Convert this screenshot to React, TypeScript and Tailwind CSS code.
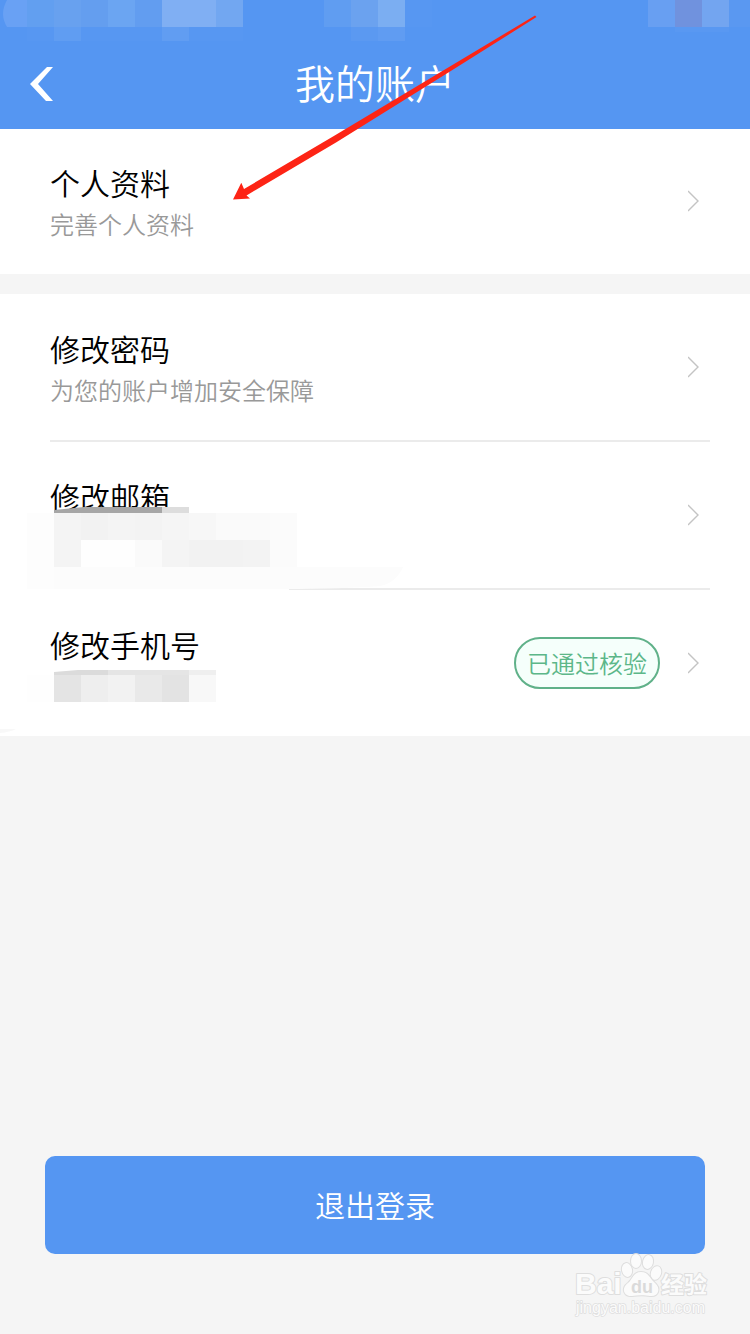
import React from "react";

type Block = [x: number, y: number, width: number, height: number, fill: string];

const statusLeft: Block[] = [
  [27, 0, 27, 27, "#629ff0"],
  [54, 0, 27, 27, "#68a1ef"],
  [81, 0, 27, 27, "#649eef"],
  [108, 0, 27, 27, "#6ba5f2"],
  [135, 0, 27, 27, "#629df0"],
  [162, 0, 54, 27, "#80aff3"],
  [216, 0, 27, 27, "#72a7f1"],
  [27, 27, 27, 14, "#5797f2"],
  [54, 27, 27, 14, "#609df2"],
  [81, 27, 81, 14, "#5797f2"],
  [162, 27, 27, 14, "#619df2"],
  [189, 27, 54, 14, "#5797f2"],
];

const statusCenter: Block[] = [
  [0, 0, 27, 27, "#609df1"],
  [27, 0, 27, 27, "#6ba2ef"],
  [54, 0, 27, 27, "#7baef2"],
  [81, 0, 27, 27, "#5797f2"],
  [27, 27, 27, 14, "#5b99f1"],
  [54, 27, 27, 14, "#609cf2"],
];

const statusRight: Block[] = [
  [0, 0, 27, 27, "#689ff2"],
  [27, 0, 27, 27, "#7092de"],
  [54, 0, 27, 27, "#73a5f0"],
  [81, 0, 21, 27, "#5a98f1"],
  [27, 27, 54, 5, "#5998f2"],
];

const emailMask: Block[] = [
  [162, 65, 27, 6, "#dddddd"],
  [27, 71, 27, 76, "#fdfdfd"],
  [54, 71, 27, 27, "#f4f4f4"],
  [81, 71, 27, 27, "#f2f2f2"],
  [108, 71, 27, 27, "#f4f4f4"],
  [135, 71, 27, 27, "#f3f3f3"],
  [162, 71, 27, 27, "#f5f5f5"],
  [189, 71, 27, 27, "#f7f7f7"],
  [216, 71, 54, 27, "#fafafa"],
  [270, 71, 27, 27, "#fbfbfb"],
  [54, 98, 27, 27, "#f4f4f4"],
  [81, 98, 54, 27, "#fefefe"],
  [135, 98, 27, 27, "#fafafa"],
  [162, 98, 27, 27, "#f4f4f4"],
  [189, 98, 54, 27, "#f2f2f2"],
  [243, 98, 27, 27, "#f3f3f3"],
  [270, 98, 27, 27, "#fbfbfb"],
];

const phoneMask: Block[] = [
  [108, 80, 81, 5, "#e5e5e5"],
  [189, 80, 27, 5, "#efefef"],
  [27, 85, 27, 27, "#fefefe"],
  [54, 85, 27, 27, "#e4e4e4"],
  [81, 85, 27, 27, "#eeeeee"],
  [108, 85, 27, 27, "#f2f2f2"],
  [135, 85, 27, 27, "#e9e9e9"],
  [162, 85, 27, 27, "#e3e3e3"],
  [189, 85, 27, 27, "#f8f8f8"],
];

function Blocks({ items }: { items: Block[] }) {
  return (
    <>
      {items.map(([x, y, width, height, fill]) => (
        <rect key={`${x}-${y}`} x={x} y={y} width={width} height={height} fill={fill} />
      ))}
    </>
  );
}

function Header() {
  return (
    <header className="relative h-[129px] bg-[#5596f2] pt-[38px] text-white">
      <svg className="absolute top-0 left-0" width="243" height="41" shapeRendering="crispEdges" aria-hidden="true">
        <path d="M7 0H27V27H7Q-1 14 7 0Z" fill="#69a1f4" shapeRendering="auto" />
        <Blocks items={statusLeft} />
      </svg>
      <svg className="absolute top-0 left-[324px]" width="108" height="41" shapeRendering="crispEdges" aria-hidden="true">
        <Blocks items={statusCenter} />
      </svg>
      <svg className="absolute top-0 right-0" width="102" height="41" shapeRendering="crispEdges" aria-hidden="true">
        <Blocks items={statusRight} />
      </svg>
      <div className="grid h-full grid-cols-[1fr_auto_1fr] items-center">
        <button type="button" aria-label="返回" className="flex h-16 w-20 items-center pl-[30px]">
          <svg width="24" height="36" viewBox="0 0 24 36" aria-hidden="true">
            <path d="M17 1H23L8 18L23 35H16L0 18Z" fill="currentColor" />
          </svg>
        </button>
        <h1 className="pb-1 text-[40px] leading-[56px] font-[350]">我的账户</h1>
      </div>
    </header>
  );
}

interface RowProps {
  title: string;
  subtitle?: string;
  badge?: string;
  divided?: boolean;
  children?: React.ReactNode;
}

function Row({ title, subtitle, badge, divided, children }: RowProps) {
  return (
    <li className="relative">
      <a href="#" className="flex items-center pr-[50px] pl-[50px]">
        <div className="flex-1 pt-[34px] pb-7">
          <div className="text-[30px] leading-10 font-[350] text-black">{title}</div>
          <div className="h-11 text-2xl leading-[44px] font-[350] text-[#999999]">{subtitle}</div>
        </div>
        {badge && (
          <span className="mr-7 flex h-[52px] w-[146px] items-center justify-center rounded-full border-2 border-[#60b189] bg-[#f5fffb] text-2xl font-[350] whitespace-nowrap text-[#5cb789]">
            {badge}
          </span>
        )}
        <svg width="12" height="22" viewBox="0 0 12 22" fill="none" stroke="#c4c4c4" strokeWidth="1.4" aria-hidden="true">
          <path d="M0 1L10 11L0 21" />
        </svg>
      </a>
      {divided && <div className="mr-10 ml-[50px] h-0.5 bg-[#ebebeb]" />}
      {children}
    </li>
  );
}

function Arrow() {
  return (
    <svg className="pointer-events-none absolute top-0 left-0" width="540" height="204" aria-hidden="true">
      <path
        d="M535 15.5L333 136.5L244 189L241.3 182.7L233 199.5L250 198.5L246.5 195.5L336 142.5L450 71.5L536.5 17Z"
        fill="#fd2415"
      />
    </svg>
  );
}

function Watermark() {
  return (
    <svg
      className="absolute right-9 bottom-3 font-['Liberation_Sans','Noto_Sans_CJK_SC',sans-serif]"
      width="142"
      height="70"
      viewBox="0 0 142 70"
      fill="#fbfbfb"
      stroke="#dedede"
      strokeWidth="2"
      strokeLinejoin="round"
      paintOrder="stroke"
      role="img"
      aria-label="Baidu 经验"
    >
      <text x="3" y="42" fontSize="30" fontWeight="700">Bai</text>
      <ellipse cx="55" cy="18" rx="5" ry="7" transform="rotate(-12 55 18)" />
      <ellipse cx="64" cy="9" rx="5" ry="7" />
      <ellipse cx="76" cy="10" rx="5" ry="7" transform="rotate(12 76 10)" />
      <ellipse cx="84" cy="21" rx="5" ry="7" transform="rotate(18 84 21)" />
      <path d="M69 20C61 20 61 27 56 31C48 37 53 45 60 44C66 43 73 43 78 44C87 45 89 36 83 31C77 26 77 20 69 20Z" />
      <text x="59" y="41" fontSize="18" fontWeight="700" fill="#dadada" stroke="none">du</text>
      <text x="89" y="41" fontSize="23" fontWeight="700">经验</text>
      <text x="4" y="61" fontSize="16" strokeWidth="1.5">jingyan.baidu.com</text>
    </svg>
  );
}

export default function App() {
  return (
    <div className="relative flex min-h-screen flex-col bg-[#f5f5f5] font-['Noto_Sans_CJK_SC',sans-serif]">
      <Header />
      <main className="-mt-px flex flex-1 flex-col">
        <ul className="bg-white">
          <Row title="个人资料" subtitle="完善个人资料" />
        </ul>
        <ul className="mt-5 bg-white">
          <Row title="修改密码" subtitle="为您的账户增加安全保障" divided />
          <Row title="修改邮箱" divided>
            <svg className="pointer-events-none absolute top-0 left-0" width="404" height="150" aria-hidden="true">
              <rect x="27" y="71" width="262" height="78" fill="#fff" />
              <path d="M54 125H403Q396 141 380 144Q340 147 284 147H54Z" fill="#fcfcfc" />
              <path d="M54 68L84 65H162V71H54Z" fill="#a6a6a6" />
              <g shapeRendering="crispEdges">
                <Blocks items={emailMask} />
              </g>
            </svg>
          </Row>
          <Row title="修改手机号" badge="已通过核验">
            <svg className="pointer-events-none absolute top-0 left-0" width="216" height="146" aria-hidden="true">
              <path d="M54 82L78 80H108V85H54Z" fill="#dbdbdb" />
              <path d="M0 139H16Q10 142 0 143Z" fill="#f8f8f8" />
              <g shapeRendering="crispEdges">
                <Blocks items={phoneMask} />
              </g>
            </svg>
          </Row>
        </ul>
        <button
          type="button"
          className="mx-[45px] mt-auto mb-20 h-[98px] rounded-[10px] bg-[#5596f2] pb-0.5 text-[30px] font-[350] text-white"
        >
          退出登录
        </button>
      </main>
      <Arrow />
      <Watermark />
    </div>
  );
}
